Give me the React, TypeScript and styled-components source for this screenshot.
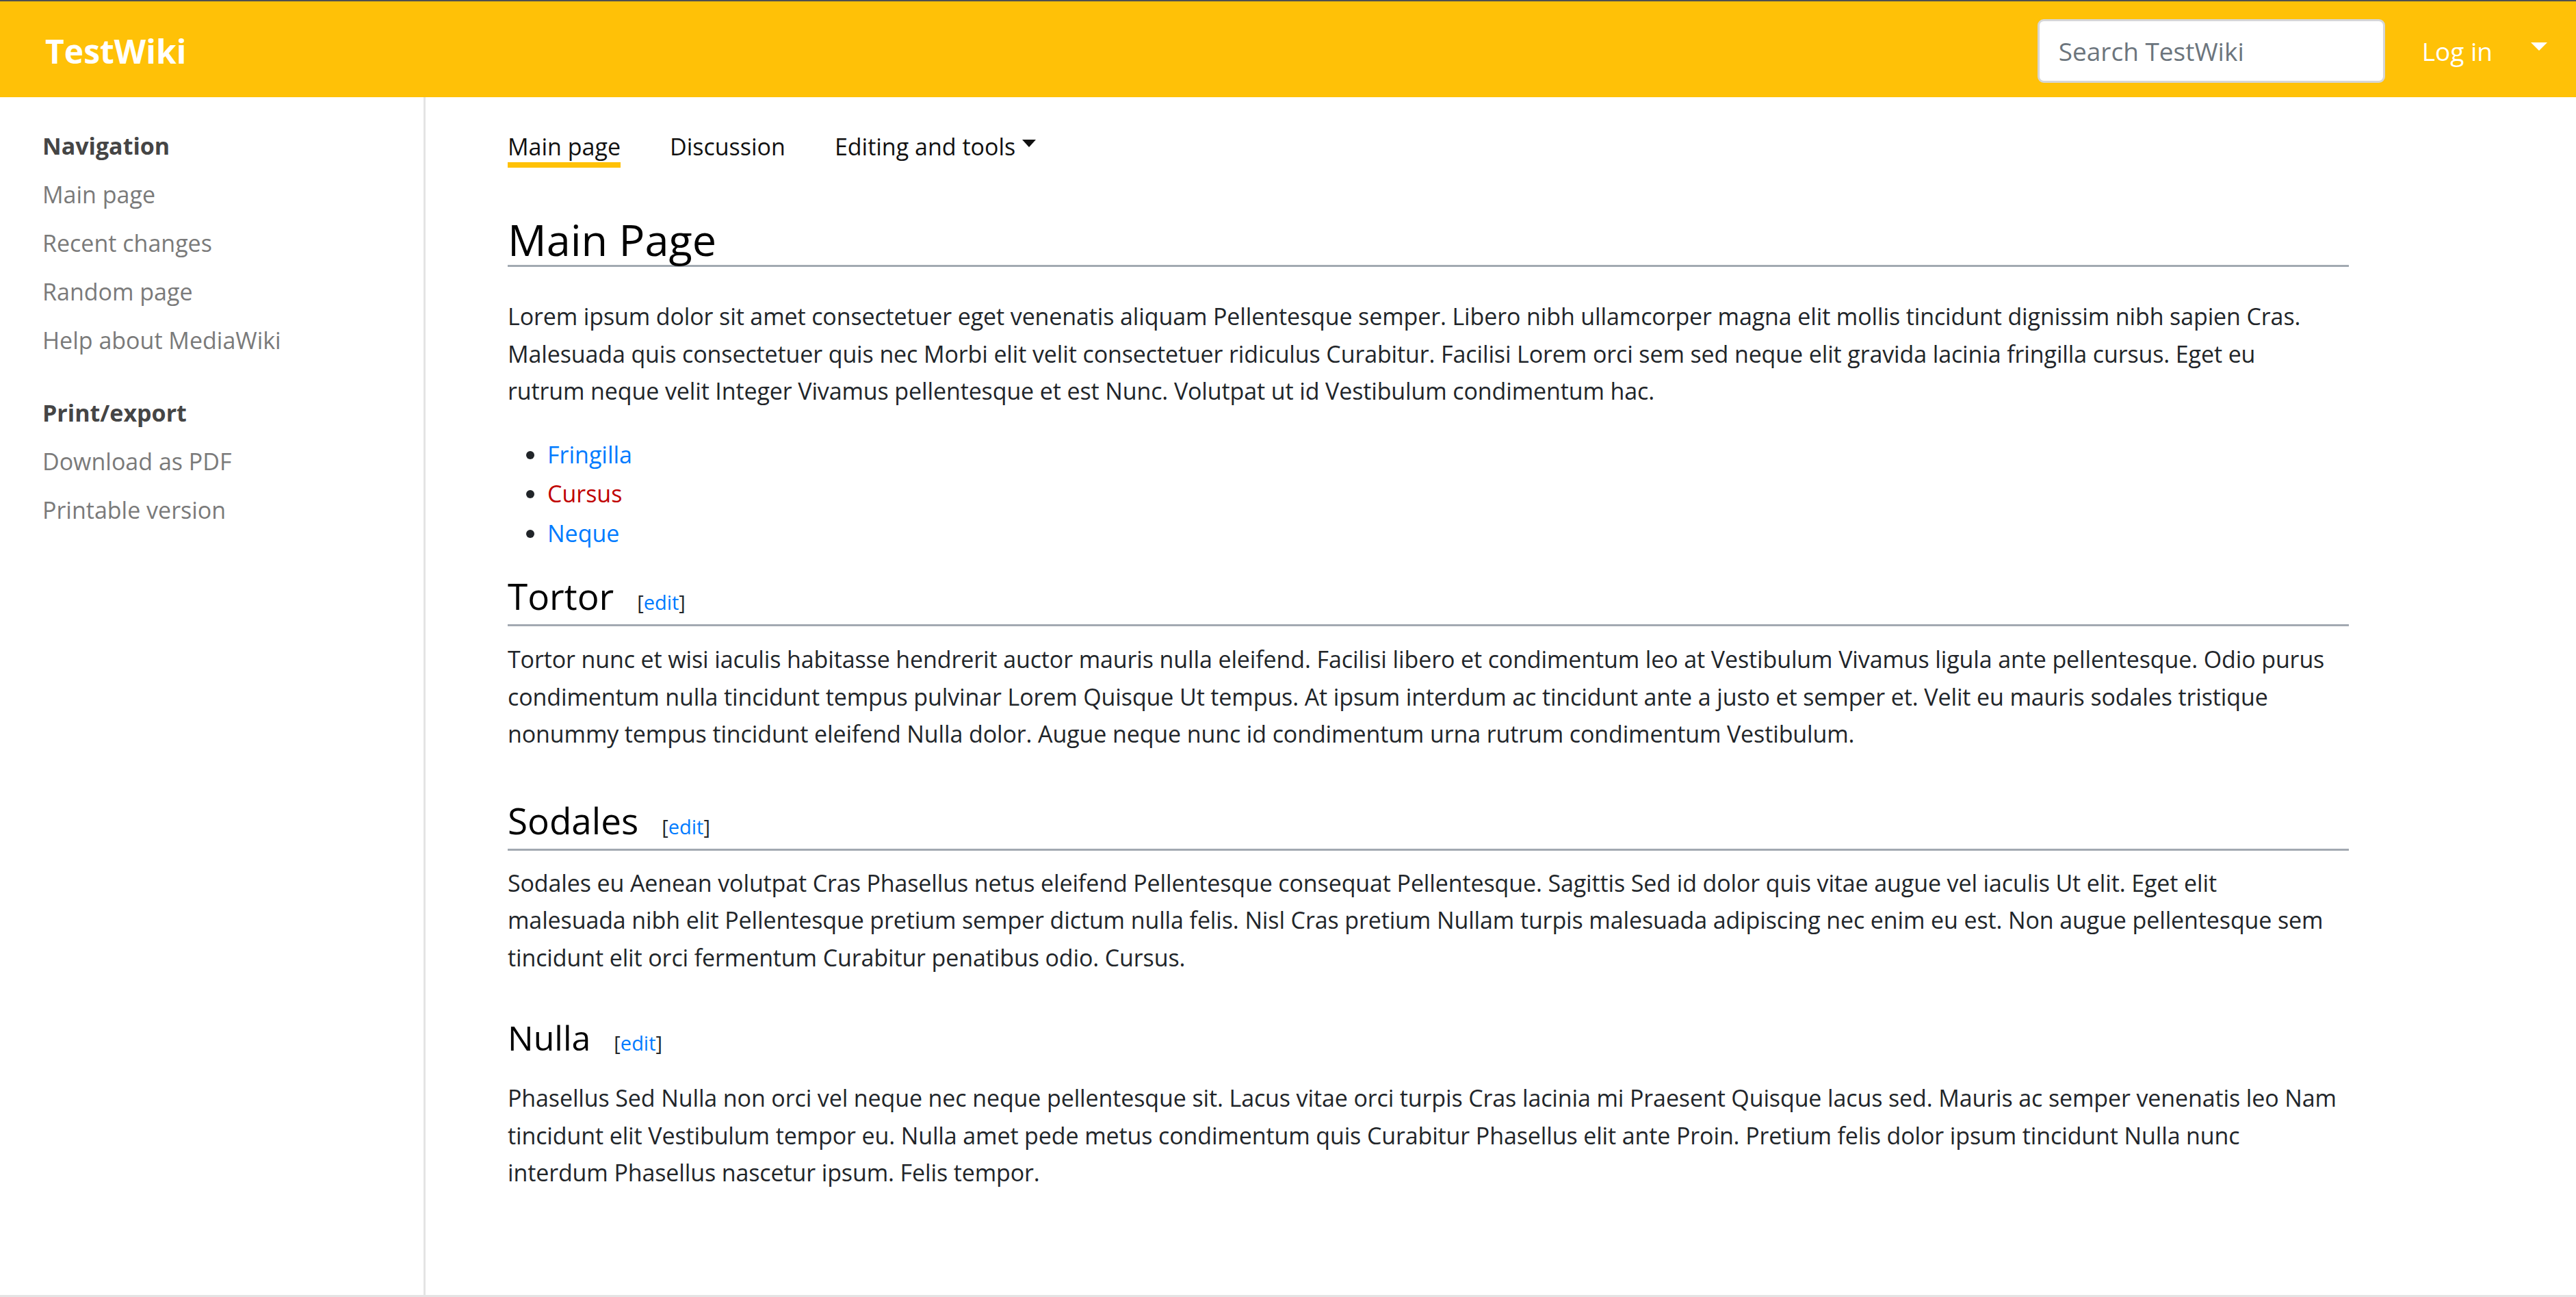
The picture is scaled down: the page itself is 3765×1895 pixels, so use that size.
import React from "react";
import styled, { createGlobalStyle } from "styled-components";

const GlobalStyle = createGlobalStyle`
  html, body {
    margin: 0;
    padding: 0;
    background: #fff;
  }

  body {
    font-family: "Open Sans", "Noto Sans", "Liberation Sans", sans-serif;
    color: #212529;
  }

  * {
    box-sizing: border-box;
  }
`;

const Page = styled.div`
  display: flex;
  flex-direction: column;
  min-height: 100vh;
`;

const Navbar = styled.header`
  display: flex;
  align-items: center;
  justify-content: space-between;
  height: 142px;
  padding: 4px 42px 0 66px;
  background: #ffc107;
  border-top: 2px solid #505050;
`;

const Brand = styled.a`
  font-size: 48px;
  font-weight: 700;
  color: #fff;
  text-decoration: none;
`;

const NavRight = styled.div`
  display: flex;
  align-items: center;
`;

const SearchInput = styled.input`
  width: 508px;
  height: 93px;
  padding: 0 28px;
  border: 3px solid #d6d6d6;
  border-radius: 9px;
  font-family: inherit;
  font-size: 37px;
  color: #495057;
  outline: none;

  &::placeholder {
    color: #6c757d;
  }
`;

const LoginLink = styled.a`
  margin-left: 54px;
  font-size: 37px;
  color: #fff;
  text-decoration: none;
`;

const Caret = styled.span`
  display: inline-block;
  margin-left: 56px;
  border-top: 12px solid #fff;
  border-left: 12px solid transparent;
  border-right: 12px solid transparent;
  transform: translateY(-6px);
`;

const Body = styled.div`
  display: flex;
  flex: 1;
`;

const Sidebar = styled.aside`
  flex: 0 0 622px;
  padding: 36px 0 0 62px;
  border-right: 3px solid #e4e4e4;
`;

const SideSection = styled.nav`
  & + & {
    margin-top: 35px;
  }
`;

const SideHeading = styled.div`
  font-size: 34px;
  line-height: 71px;
  font-weight: 700;
  color: #454545;
`;

const SideLink = styled.a`
  display: block;
  font-size: 34px;
  line-height: 71px;
  color: #7a7a7a;
  text-decoration: none;
`;

const Content = styled.main`
  flex: 1;
  min-width: 0;
  padding: 50px 332px 60px 120px;
`;

const Tabs = styled.div`
  display: flex;
  gap: 72px;
`;

const Tab = styled.a<{ $active?: boolean }>`
  display: flex;
  align-items: center;
  font-size: 34px;
  line-height: 45px;
  color: #111;
  text-decoration: none;
  border-bottom: 8px solid ${(p) => (p.$active ? "#ffc107" : "transparent")};
`;

const TabCaret = styled.span`
  display: inline-block;
  margin-left: 10px;
  border-top: 11px solid #111;
  border-left: 10px solid transparent;
  border-right: 10px solid transparent;
  transform: translateY(-5px);
`;

const Title = styled.h1`
  margin: 68px 0 0;
  font-size: 63px;
  font-weight: 400;
  line-height: 74px;
  color: #000;
  border-bottom: 3px solid #a2a9b1;
`;

const SectionHeading = styled.h2<{ $ruled?: boolean; $gap: number }>`
  margin: ${(p) => p.$gap}px 0 0;
  font-size: ${(p) => (p.$ruled ? "53px" : "50px")};
  line-height: ${(p) => (p.$ruled ? "64px" : "60px")};
  font-weight: 400;
  color: #000;
  border-bottom: ${(p) => (p.$ruled ? "3px solid #a2a9b1" : "none")};
`;

const EditLink = styled.span`
  margin-left: 34px;
  font-size: 29px;
  color: #212529;

  a {
    color: #007bff;
    text-decoration: none;
  }
`;

const Paragraph = styled.p<{ $gap: number }>`
  margin: ${(p) => p.$gap}px 0 0;
  font-size: 34px;
  line-height: 54.5px;
  letter-spacing: -0.12px;
  color: #212529;
`;

const Line = styled.span`
  display: block;
  white-space: nowrap;
`;

const LinkList = styled.ul`
  margin: 37px 0 0;
  padding-left: 58px;
  font-size: 34px;
  line-height: 57.5px;
`;

const WikiLink = styled.a<{ $missing?: boolean }>`
  color: ${(p) => (p.$missing ? "#c00000" : "#007bff")};
  text-decoration: none;
`;

const Footer = styled.footer`
  height: 3px;
  background: #e4e4e4;
`;

const intro = [
  "Lorem ipsum dolor sit amet consectetuer eget venenatis aliquam Pellentesque semper. Libero nibh ullamcorper magna elit mollis tincidunt dignissim nibh sapien Cras.",
  "Malesuada quis consectetuer quis nec Morbi elit velit consectetuer ridiculus Curabitur. Facilisi Lorem orci sem sed neque elit gravida lacinia fringilla cursus. Eget eu",
  "rutrum neque velit Integer Vivamus pellentesque et est Nunc. Volutpat ut id Vestibulum condimentum hac.",
];

const sections = [
  {
    title: "Tortor",
    ruled: true,
    gap: 31,
    textGap: 21,
    lines: [
      "Tortor nunc et wisi iaculis habitasse hendrerit auctor mauris nulla eleifend. Facilisi libero et condimentum leo at Vestibulum Vivamus ligula ante pellentesque. Odio purus",
      "condimentum nulla tincidunt tempus pulvinar Lorem Quisque Ut tempus. At ipsum interdum ac tincidunt ante a justo et semper et. Velit eu mauris sodales tristique",
      "nonummy tempus tincidunt eleifend Nulla dolor. Augue neque nunc id condimentum urna rutrum condimentum Vestibulum.",
    ],
  },
  {
    title: "Sodales",
    ruled: true,
    gap: 67,
    textGap: 20,
    lines: [
      "Sodales eu Aenean volutpat Cras Phasellus netus eleifend Pellentesque consequat Pellentesque. Sagittis Sed id dolor quis vitae augue vel iaculis Ut elit. Eget elit",
      "malesuada nibh elit Pellentesque pretium semper dictum nulla felis. Nisl Cras pretium Nullam turpis malesuada adipiscing nec enim eu est. Non augue pellentesque sem",
      "tincidunt elit orci fermentum Curabitur penatibus odio. Cursus.",
    ],
  },
  {
    title: "Nulla",
    ruled: false,
    gap: 60,
    textGap: 23,
    lines: [
      "Phasellus Sed Nulla non orci vel neque nec neque pellentesque sit. Lacus vitae orci turpis Cras lacinia mi Praesent Quisque lacus sed. Mauris ac semper venenatis leo Nam",
      "tincidunt elit Vestibulum tempor eu. Nulla amet pede metus condimentum quis Curabitur Phasellus elit ante Proin. Pretium felis dolor ipsum tincidunt Nulla nunc",
      "interdum Phasellus nascetur ipsum. Felis tempor.",
    ],
  },
];

const sidebar = [
  {
    heading: "Navigation",
    links: ["Main page", "Recent changes", "Random page", "Help about MediaWiki"],
  },
  { heading: "Print/export", links: ["Download as PDF", "Printable version"] },
];

export default function App() {
  return (
    <>
      <GlobalStyle />
      <Page>
        <Navbar>
          <Brand href="#">TestWiki</Brand>
          <NavRight>
            <SearchInput placeholder="Search TestWiki" />
            <LoginLink href="#">Log in</LoginLink>
            <Caret />
          </NavRight>
        </Navbar>

        <Body>
          <Sidebar>
            {sidebar.map((s) => (
              <SideSection key={s.heading}>
                <SideHeading>{s.heading}</SideHeading>
                {s.links.map((l) => (
                  <SideLink key={l} href="#">
                    {l}
                  </SideLink>
                ))}
              </SideSection>
            ))}
          </Sidebar>

          <Content>
            <Tabs>
              <Tab $active href="#">
                Main page
              </Tab>
              <Tab href="#">Discussion</Tab>
              <Tab href="#">
                Editing and tools
                <TabCaret />
              </Tab>
            </Tabs>

            <Title>Main Page</Title>
            <Paragraph $gap={45}>
              {intro.map((l) => (
                <Line key={l}>{l}</Line>
              ))}
            </Paragraph>

            <LinkList>
              <li>
                <WikiLink href="#">Fringilla</WikiLink>
              </li>
              <li>
                <WikiLink $missing href="#">
                  Cursus
                </WikiLink>
              </li>
              <li>
                <WikiLink href="#">Neque</WikiLink>
              </li>
            </LinkList>

            {sections.map((s) => (
              <section key={s.title}>
                <SectionHeading
                  as={s.ruled ? "h2" : "h3"}
                  $ruled={s.ruled}
                  $gap={s.gap}
                >
                  {s.title}
                  <EditLink>
                    [<a href="#">edit</a>]
                  </EditLink>
                </SectionHeading>
                <Paragraph $gap={s.textGap}>
                  {s.lines.map((l) => (
                    <Line key={l}>{l}</Line>
                  ))}
                </Paragraph>
              </section>
            ))}
          </Content>
        </Body>
        <Footer />
      </Page>
    </>
  );
}
